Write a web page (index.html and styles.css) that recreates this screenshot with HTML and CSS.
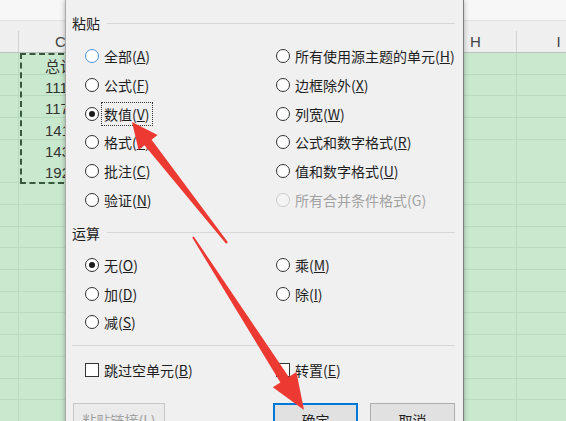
FILE: index.html
```html
<!DOCTYPE html>
<html lang="zh-CN">
<head>
    <meta charset="UTF-8">
    <meta name="viewport" content="width=device-width, initial-scale=1.0">
    <title>选择性粘贴</title>
    <link rel="stylesheet" href="styles.css">
</head>
<body>
    <div class="screen">
        <div class="sheet">
            <div class="formula-bar"></div>
            <div class="col-heads">
                <div class="ch"></div>
                <div class="ch">C</div>
                <div class="ch"></div>
                <div class="ch"></div>
                <div class="ch"></div>
                <div class="ch"></div>
                <div class="ch">H</div>
                <div class="ch">I</div>
            </div>
            <div class="cells">
                <div class="col"></div>
                <div class="col">
                    <div class="copied">
                        <div class="cell">总计</div>
                        <div class="cell">1115</div>
                        <div class="cell">1176</div>
                        <div class="cell">1410</div>
                        <div class="cell">1432</div>
                        <div class="cell">1920</div>
                    </div>
                </div>
                <div class="col"></div>
                <div class="col"></div>
                <div class="col"></div>
                <div class="col"></div>
                <div class="col"></div>
                <div class="col"></div>
            </div>
        </div>

        <div class="dialog">
            <div class="group-title">粘贴</div>
            <div class="options paste-opts">
                <div class="opt"><span class="radio hot"></span>全部(<u>A</u>)</div>
                <div class="opt"><span class="radio"></span>所有使用源主题的单元(<u>H</u>)</div>
                <div class="opt"><span class="radio"></span>公式(<u>F</u>)</div>
                <div class="opt"><span class="radio"></span>边框除外(<u>X</u>)</div>
                <div class="opt"><span class="radio checked"></span><span class="focus">数值(<u>V</u>)</span></div>
                <div class="opt"><span class="radio"></span>列宽(<u>W</u>)</div>
                <div class="opt"><span class="radio"></span>格式(<u>T</u>)</div>
                <div class="opt"><span class="radio"></span>公式和数字格式(<u>R</u>)</div>
                <div class="opt"><span class="radio"></span>批注(<u>C</u>)</div>
                <div class="opt"><span class="radio"></span>值和数字格式(<u>U</u>)</div>
                <div class="opt"><span class="radio"></span>验证(<u>N</u>)</div>
                <div class="opt disabled"><span class="radio"></span>所有合并条件格式(G)</div>
            </div>

            <div class="group-title second">运算</div>
            <div class="options op-opts">
                <div class="opt"><span class="radio checked"></span>无(<u>O</u>)</div>
                <div class="opt"><span class="radio"></span>乘(<u>M</u>)</div>
                <div class="opt"><span class="radio"></span>加(<u>D</u>)</div>
                <div class="opt"><span class="radio"></span>除(<u>I</u>)</div>
                <div class="opt"><span class="radio"></span>减(<u>S</u>)</div>
            </div>

            <div class="separator"></div>

            <div class="options checks">
                <div class="opt"><span class="check"></span>跳过空单元(<u>B</u>)</div>
                <div class="opt"><span class="check"></span>转置(<u>E</u>)</div>
            </div>

            <div class="buttons">
                <button class="btn link-btn" disabled>粘贴链接(L)</button>
                <button class="btn default-btn">确定</button>
                <button class="btn">取消</button>
            </div>
        </div>

        <!-- 红色箭头标注 -->
        <svg class="arrows" width="566" height="421" viewBox="0 0 566 421">
            <polygon points="132,122 157.5,135 151.6,139.7 227.9,242.3 226.1,243.7 144.5,145.2 138.6,149.9" />
            <polygon points="304,410 296.4,372.1 288.8,377 193.8,236.5 192.2,237.5 280.4,382.4 272.8,387.3" />
        </svg>
    </div>
</body>
</html>
```

FILE: styles.css
```css
* {
    margin: 0;
    padding: 0;
    box-sizing: border-box;
}

body {
    font-family: "Noto Sans CJK SC", "Noto Sans", sans-serif;
    background: #ffffff;
    color: #1e1e1e;
}

.screen {
    position: relative;
    width: 566px;
    height: 421px;
    overflow: hidden;
}

/* 表格背景 */
.sheet {
    width: 566px;
    height: 421px;
    display: flex;
    flex-direction: column;
    background: #c9e9cf;
}

.formula-bar {
    height: 21px;
    background: #f7f7f7;
    border-bottom: 1px solid #e1e1e1;
}

.col-heads,
.cells {
    display: grid;
    grid-template-columns: 19px 84px 84px 84px 84px 80px 82px 84px;
}

.col-heads {
    height: 32px;
    padding-top: 10px;
    background: #efefef;
    border-bottom: 1px solid #bfbfbf;
}

.ch {
    height: 21px;
    border-right: 1px solid #d2d2d2;
    text-align: center;
    font-family: "Liberation Sans", Arial, sans-serif;
    font-size: 15px;
    line-height: 21px;
    color: #444;
}

.cells {
    flex: 1;
    background: repeating-linear-gradient(to bottom, transparent 0, transparent 20.7px, #b7dbbf 20.7px, #b7dbbf 21.7px);
}

.col {
    border-right: 1px solid #b7dbbf;
}

.copied {
    height: 131px;
    border: 2px dashed #36583d;
    margin-left: 1px;
}

.cell {
    height: 21.2px;
    padding: 3px 0 0 23px;
    font-family: "Liberation Sans", Arial, "Noto Sans CJK SC", sans-serif;
    font-size: 15px;
    line-height: 18px;
    color: #333;
    white-space: nowrap;
}

/* 选择性粘贴对话框 */
.dialog {
    position: absolute;
    left: 65px;
    top: 0;
    width: 399px;
    height: 450px;
    padding: 13px 8px 0 6px;
    background: #f0f0f0;
    border-left: 1px solid #a9a9a9;
    border-right: 1px solid #7d7d7d;
    box-shadow: 0 0 5px rgba(0, 0, 0, 0.3);
    font-size: 14px;
}

.group-title {
    display: flex;
    align-items: center;
    gap: 7px;
    height: 20px;
    line-height: 20px;
}

.group-title::after {
    content: "";
    flex: 1;
    height: 1px;
    background: #d7d7d7;
}

.group-title.second {
    margin-top: 9px;
}

.options {
    display: grid;
    grid-template-columns: 191px 1fr;
    grid-auto-rows: 28.65px;
    margin-left: 13px;
}

.paste-opts {
    margin-top: 9px;
}

.op-opts {
    margin-top: 8px;
}

.opt {
    display: flex;
    align-items: center;
    white-space: nowrap;
}

.opt.disabled {
    color: #a2a2a2;
}

.radio {
    position: relative;
    width: 14px;
    height: 14px;
    margin-right: 5px;
    border: 1px solid #333;
    border-radius: 50%;
    background: #fff;
    flex-shrink: 0;
}

.radio.hot {
    border-color: #4f95dc;
}

.radio.checked::after {
    content: "";
    position: absolute;
    left: 3px;
    top: 3px;
    width: 6px;
    height: 6px;
    border-radius: 50%;
    background: #1b1b1b;
}

.opt.disabled .radio {
    border-color: #cbcbcb;
    background: #f4f4f4;
}

.focus {
    outline: 1px dotted #333;
    outline-offset: 1px;
    padding: 0 1px;
    margin-left: -1px;
}

.separator {
    height: 1px;
    margin-top: 8px;
    background: #d7d7d7;
}

.checks {
    margin-top: 10px;
}

.check {
    width: 14px;
    height: 14px;
    margin-right: 5px;
    border: 1px solid #333;
    background: #fff;
    flex-shrink: 0;
}

.buttons {
    display: flex;
    gap: 12px;
    margin-top: 18.5px;
    padding-left: 1px;
}

.btn {
    width: 85px;
    height: 34px;
    border: 1px solid #adadad;
    background: #e1e1e1;
    font-family: inherit;
    font-size: 14px;
    color: #1e1e1e;
}

.link-btn {
    width: 92px;
    margin-right: auto;
    border-color: #c6c6c6;
    background: #ebebeb;
    color: #a0a0a0;
}

.default-btn {
    border: 2px solid #0078d7;
}

.arrows {
    position: absolute;
    left: 0;
    top: 0;
    pointer-events: none;
}

.arrows polygon {
    fill: #ec3932;
}
```
